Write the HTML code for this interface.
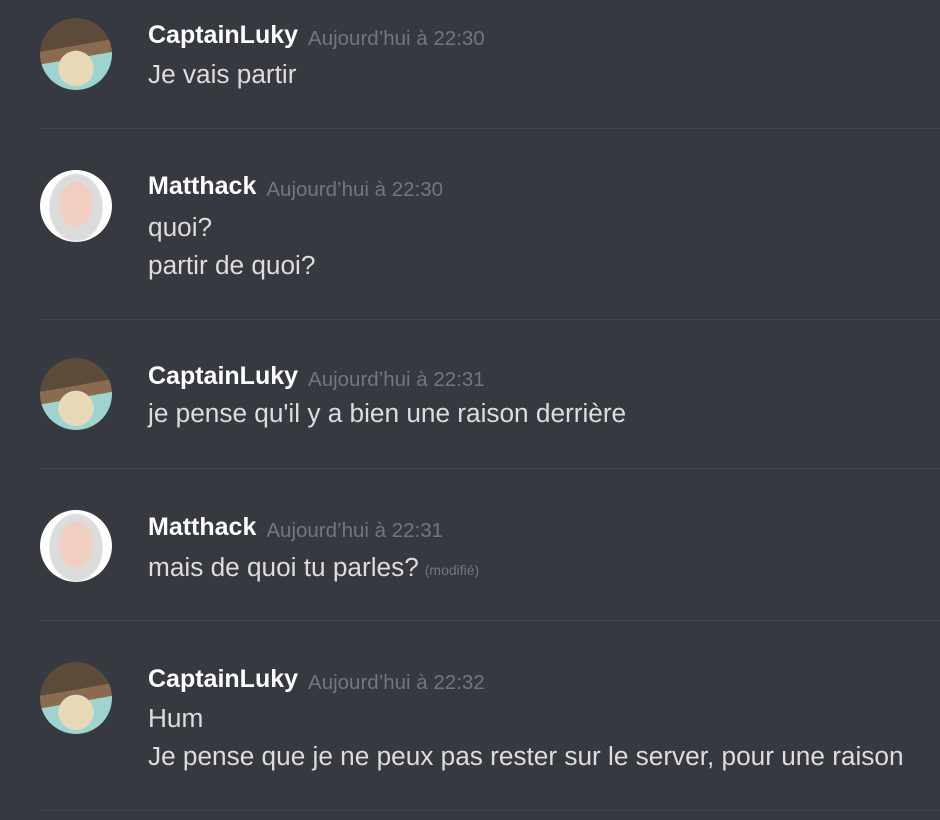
<!DOCTYPE html>
<html><head><meta charset="utf-8"><style>
body{margin:0;width:940px;height:820px;background:#36393f;overflow:hidden;font-family:"Liberation Sans",sans-serif;position:relative}
.av{position:absolute;left:40px;width:72px;height:72px;border-radius:50%;overflow:hidden}
.cap{background:radial-gradient(circle at 50% 70%,#e8d9b8 0 28%,transparent 29%),linear-gradient(170deg,#5c4a3a 0 40%,#8a6a50 40% 55%,#9fd3cf 55%)}
.mat{background:radial-gradient(ellipse 24% 32% at 50% 48%,#f0cfc2 0 95%,transparent 100%),radial-gradient(ellipse 38% 48% at 50% 52%,#dcdcdc 0 95%,transparent 100%),#fff}
.n{position:absolute;left:148px;line-height:38px;color:#fff;font-weight:bold;font-size:25px;white-space:nowrap}
.n span{color:#72767d;font-weight:normal;font-size:20.5px;margin-left:10px;position:relative;top:2px}
.t{position:absolute;left:148px;line-height:38px;color:#dcddde;font-size:26.2px;white-space:nowrap}
.t small{color:#72767d;font-size:14px;margin-left:6px;vertical-align:1px}
.d{position:absolute;left:40px;right:0;height:1px;background:#42454a}
</style></head><body>
<div class="av cap" style="top:18px"></div>
<div class="n" style="top:16px">CaptainLuky<span>Aujourd’hui à 22:30</span></div>
<div class="t" style="top:55px">Je vais partir</div>
<div class="d" style="top:128px"></div>

<div class="av mat" style="top:170px"></div>
<div class="n" style="top:167px">Matthack<span>Aujourd’hui à 22:30</span></div>
<div class="t" style="top:208px">quoi?<br>partir de quoi?</div>
<div class="d" style="top:319px"></div>

<div class="av cap" style="top:358px"></div>
<div class="n" style="top:357px">CaptainLuky<span>Aujourd’hui à 22:31</span></div>
<div class="t" style="top:394px">je pense qu'il y a bien une raison derrière</div>
<div class="d" style="top:468px"></div>

<div class="av mat" style="top:510px"></div>
<div class="n" style="top:508px">Matthack<span>Aujourd’hui à 22:31</span></div>
<div class="t" style="top:548px">mais de quoi tu parles?<small>(modifié)</small></div>
<div class="d" style="top:620px"></div>

<div class="av cap" style="top:662px"></div>
<div class="n" style="top:660px">CaptainLuky<span>Aujourd’hui à 22:32</span></div>
<div class="t" style="top:699px">Hum<br>Je pense que je ne peux pas rester sur le server, pour une raison</div>
<div class="d" style="top:810px"></div>
</body></html>
